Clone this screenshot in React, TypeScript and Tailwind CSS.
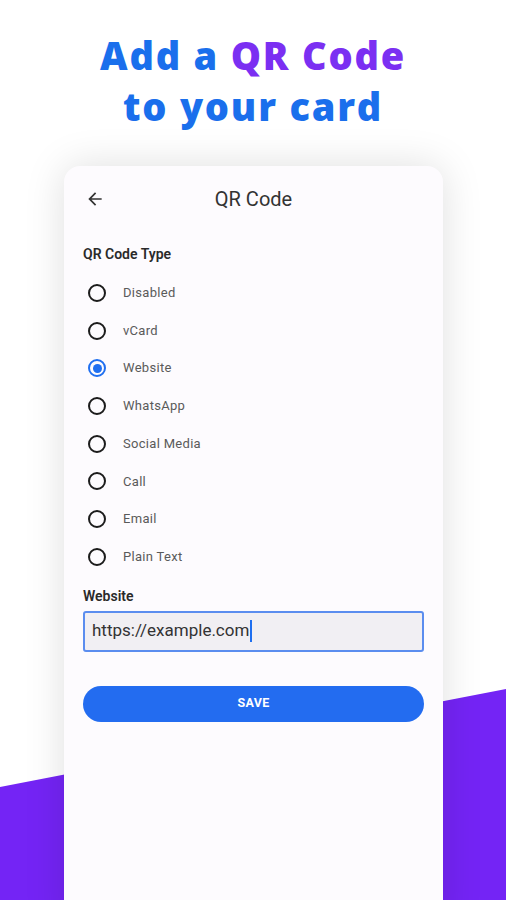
import React from "react";

const options = ["Disabled", "vCard", "Website", "WhatsApp", "Social Media", "Call", "Email", "Plain Text"];

export default function App() {
  return (
    <div className="relative h-[900px] w-[506px] overflow-hidden bg-white" style={{ fontFamily: "Roboto, 'Noto Sans', sans-serif" }}>
      <svg className="absolute inset-0" width="506" height="900" viewBox="0 0 506 900">
        <polygon points="0,787 506,689 506,900 0,900" fill="#7424f5" />
      </svg>
      <div className="relative flex flex-col items-center">
        <h1
          className="mt-[30px] h-[104px] text-center text-[38px] font-extrabold leading-[51px] tracking-[1.8px] text-[#1a6fec]"
          style={{ fontFamily: "'Open Sans', Lato, sans-serif" }}
        >
          Add a <span className="text-[#7b2ff2]">QR Code</span>
          <br />
          to your card
        </h1>
      </div>
      <div className="relative ml-[64px] mt-[32px] h-[760px] w-[379px] rounded-t-[16px] bg-[#fdfbfe] px-[19px] shadow-[0_0_40px_rgba(0,0,0,0.13)]">
        <div className="relative flex h-[66px] items-center justify-center">
          <svg className="absolute left-[2px] top-[23px]" width="20" height="20" viewBox="0 0 24 24" fill="#333">
            <path d="M20 11H7.83l5.59-5.59L12 4l-8 8 8 8 1.41-1.41L7.83 13H20v-2z" />
          </svg>
          <span className="text-[20px] text-[#333]">QR Code</span>
        </div>
        <div className="mt-[12px] text-[14px] font-semibold leading-[20px] text-[#2a2a2a]">QR Code Type</div>
        <div className="mt-[10px] flex flex-col">
          {options.map((o) => {
            const sel = o === "Website";
            return (
              <div key={o} className="flex h-[37.7px] items-center">
                <div
                  className={
                    sel
                      ? "ml-[5px] flex h-[18px] w-[18px] items-center justify-center rounded-full border-2 border-[#1f6ff0]"
                      : "ml-[5px] flex h-[18px] w-[18px] items-center justify-center rounded-full border-2 border-[#1c1c1c]"
                  }
                >
                  {sel && <div className="h-[9px] w-[9px] rounded-full bg-[#1f6ff0]" />}
                </div>
                <span className="ml-[17px] text-[13px] tracking-[0.3px] text-[#5a5a5a]">{o}</span>
              </div>
            );
          })}
        </div>
        <div className="mt-[10px] text-[14px] font-semibold leading-[20px] text-[#2a2a2a]">Website</div>
        <div className="mt-[5px] flex h-[41px] items-center rounded-[3px] border-2 border-[#5b8def] bg-[#f1eff3] px-[7px]">
          <span className="text-[17px] text-[#333]">https://example.com</span>
          <span className="ml-[1px] h-[22px] w-[2px] bg-[#1f6ff0]" />
        </div>
        <button className="mt-[34px] flex h-[36px] w-full items-center justify-center rounded-full bg-[#236cf0] text-[12.5px] font-bold tracking-[0.3px] text-white">
          SAVE
        </button>
      </div>
    </div>
  );
}
